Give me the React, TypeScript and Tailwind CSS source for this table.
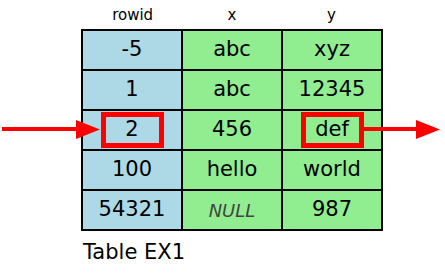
const rows: { id: string; x: string; y: string; mark?: boolean }[] = [
  { id: '-5', x: 'abc', y: 'xyz' },
  { id: '1', x: 'abc', y: '12345' },
  { id: '2', x: '456', y: 'def', mark: true },
  { id: '100', x: 'hello', y: 'world' },
  { id: '54321', x: 'NULL', y: '987' },
];

function Cell({ text, color, mark, isNull }: { text: string; color: string; mark?: boolean; isNull?: boolean }) {
  return (
    <div className={`${color} flex h-[38px] items-center justify-center`}>
      {mark ? (
        <div className="flex h-[36px] w-[63px] items-center justify-center border-[5px] border-[#ff0000] text-[21px] text-black">
          {text}
        </div>
      ) : isNull ? (
        <span className="text-[18px] italic text-[#444]">{text}</span>
      ) : (
        <span className="text-[21px] text-black">{text}</span>
      )}
    </div>
  );
}

export default function App() {
  return (
    <div className="relative h-[276px] w-[445px] bg-white font-['DejaVu_Sans',sans-serif]">
      <div className="flex flex-col pl-[81px]">
        {/* column names */}
        <div className="grid h-[29px] w-[302px] grid-cols-3 items-center px-[2px] pt-[1px] text-[15px] text-black">
          <span className="text-center">rowid</span>
          <span className="text-center">x</span>
          <span className="text-center">y</span>
        </div>

        {/* table */}
        <div className="grid w-[302px] grid-cols-3 gap-[2px] bg-black p-[2px]">
          {rows.map((r) => [
            <Cell key={r.id + 'a'} text={r.id} color="bg-[#add8e6]" mark={r.mark} />,
            <Cell key={r.id + 'b'} text={r.x} color="bg-[#90ee90]" isNull={r.x === 'NULL'} />,
            <Cell key={r.id + 'c'} text={r.y} color="bg-[#90ee90]" mark={r.mark} />,
          ])}
        </div>

        <div className="pl-[2px] pt-[6px] text-[21px] leading-[30px] text-black">Table EX1</div>
      </div>

      {/* arrows */}
      <svg className="absolute left-0 top-0" width="445" height="276" viewBox="0 0 445 276">
        <rect x="2" y="127" width="76" height="4" fill="#ff0000" />
        <polygon points="76,120 100,129.5 76,139" fill="#ff0000" />
        <rect x="362" y="127" width="56" height="4" fill="#ff0000" />
        <polygon points="416,120 440,129.5 416,139" fill="#ff0000" />
      </svg>
    </div>
  );
}
